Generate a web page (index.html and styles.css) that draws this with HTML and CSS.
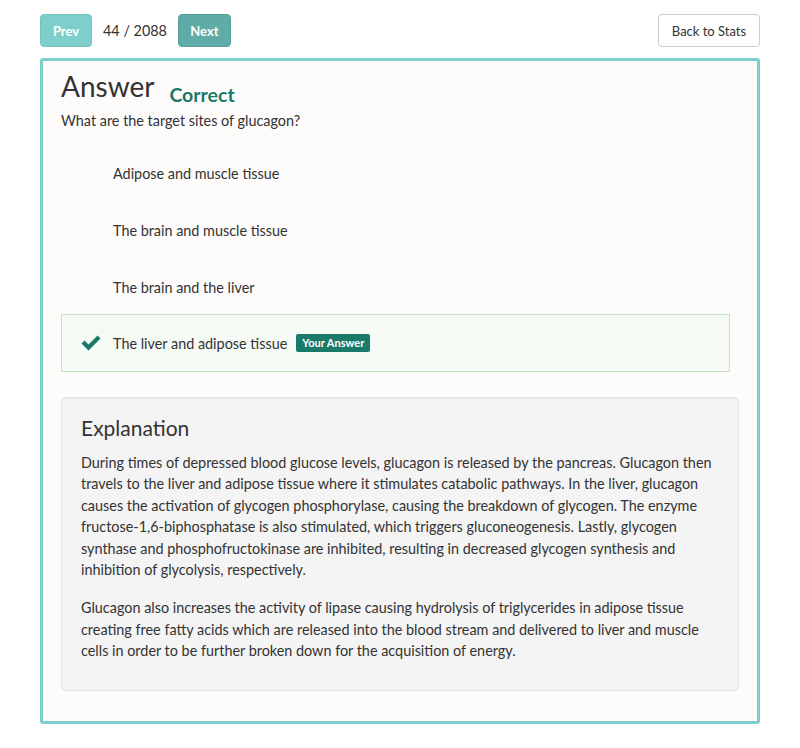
FILE: index.html
```html
<!DOCTYPE html>
<html>
<head>
<meta charset="utf-8">
<link rel="stylesheet" href="styles.css">
</head>
<body>
<div class="page">
  <div class="topbar">
    <div class="nav">
      <button class="btn btn-prev">Prev</button>
      <span class="count">44 / 2088</span>
      <button class="btn btn-next">Next</button>
    </div>
    <button class="btn btn-back">Back to Stats</button>
  </div>
  <div class="card">
    <div class="title-row">
      <h1 class="title">Answer</h1>
      <span class="status">Correct</span>
    </div>
    <p class="question">What are the target sites of glucagon?</p>
    <ul class="choices">
      <li class="choice"><span class="mark"></span><span>Adipose and muscle tissue</span></li>
      <li class="choice"><span class="mark"></span><span>The brain and muscle tissue</span></li>
      <li class="choice"><span class="mark"></span><span>The brain and the liver</span></li>
      <li class="choice selected"><span class="mark"><svg width="22" height="18" viewBox="0 0 22 18"><path d="M1.5 9.5 L4.5 6.5 L8.5 10.5 L17.5 1.5 L20.5 4.5 L8.5 16.5 Z" fill="#1a7a6a"/></svg></span><span>The liver and adipose tissue</span><span class="badge">Your Answer</span></li>
    </ul>
    <div class="well">
      <h2 class="well-title">Explanation</h2>
      <p>During times of depressed blood glucose levels, glucagon is released by the pancreas. Glucagon then travels to the liver and adipose tissue where it stimulates catabolic pathways. In the liver, glucagon causes the activation of glycogen phosphorylase, causing the breakdown of glycogen. The enzyme fructose-1,6-biphosphatase is also stimulated, which triggers gluconeogenesis. Lastly, glycogen synthase and phosphofructokinase are inhibited, resulting in decreased glycogen synthesis and inhibition of glycolysis, respectively.</p>
      <p>Glucagon also increases the activity of lipase causing hydrolysis of triglycerides in adipose tissue creating free fatty acids which are released into the blood stream and delivered to liver and muscle cells in order to be further broken down for the acquisition of energy.</p>
    </div>
  </div>
</div>
</body>
</html>
```

FILE: styles.css
```css
* { box-sizing: border-box; }
html, body { margin: 0; padding: 0; background: #fff; }
body { font-family: Lato, "Open Sans", sans-serif; color: #333; font-size: 14.4px; }
.page { width: 720px; margin: 0 auto; padding-top: 14px; }
.topbar { display: flex; justify-content: space-between; align-items: center; height: 33px; }
.nav { display: flex; align-items: center; }
.btn { font-family: inherit; font-size: 13px; height: 33px; border-radius: 4px; border: 1px solid transparent; padding: 0 12px; cursor: pointer; }
.btn-prev { background: #7ecfcc; color: #fff; font-weight: 700; width: 52px; padding: 0; border-color: #72c6c2; }
.btn-next { background: #5faba7; color: #fff; font-weight: 700; width: 53px; padding: 0; border-color: #579f9b; }
.count { font-size: 14.4px; margin: 0 11px 0 11px; color: #333; }
.btn-back { background: #fff; border-color: #ccc; color: #333; width: 102px; padding: 0; font-size: 13px; }
.card { margin-top: 11px; border: 3px solid #7ecfcc; border-radius: 3px; background: #fdfcfb; padding: 8px 18px 32px 18px; height: 666px; }
.title-row { display: flex; align-items: baseline; }
.title { font-size: 28px; font-weight: 400; margin: 0; line-height: 34px; color: #333; }
.status { font-size: 19.5px; font-weight: 700; color: #1a7a6a; margin-left: 15px; position: relative; top: 5px; }
.question { margin: 8px 0 0; line-height: 20px; }
.choices { list-style: none; margin: 14px 9px 0 0; padding: 0; }
.choice { display: flex; align-items: center; height: 57px; padding-left: 18px; border: 1px solid transparent; }
.choice .mark { width: 33px; display: inline-flex; align-items: center; }
.choice.selected { background: #f6faf4; border-color: #c3e6bc; height: 58px; margin-top: -2px; }
.badge { background: #1a7a6a; color: #fff; font-size: 11px; font-weight: 700; padding: 2px 6px 3px; border-radius: 2px; margin-left: 9px; line-height: 13px; }
.well { margin: 25px 0 0; background: #f4f4f4; border: 1px solid #e3e3e3; border-radius: 4px; padding: 16px 19px 20px; height: 294px; box-shadow: inset 0 1px 1px rgba(0,0,0,0.05); }
.well-title { font-size: 21px; font-weight: 400; margin: 0 0 10px; line-height: 28px; color: #333; }
.well p { margin: 0 0 17px; line-height: 21.4px; }
```
